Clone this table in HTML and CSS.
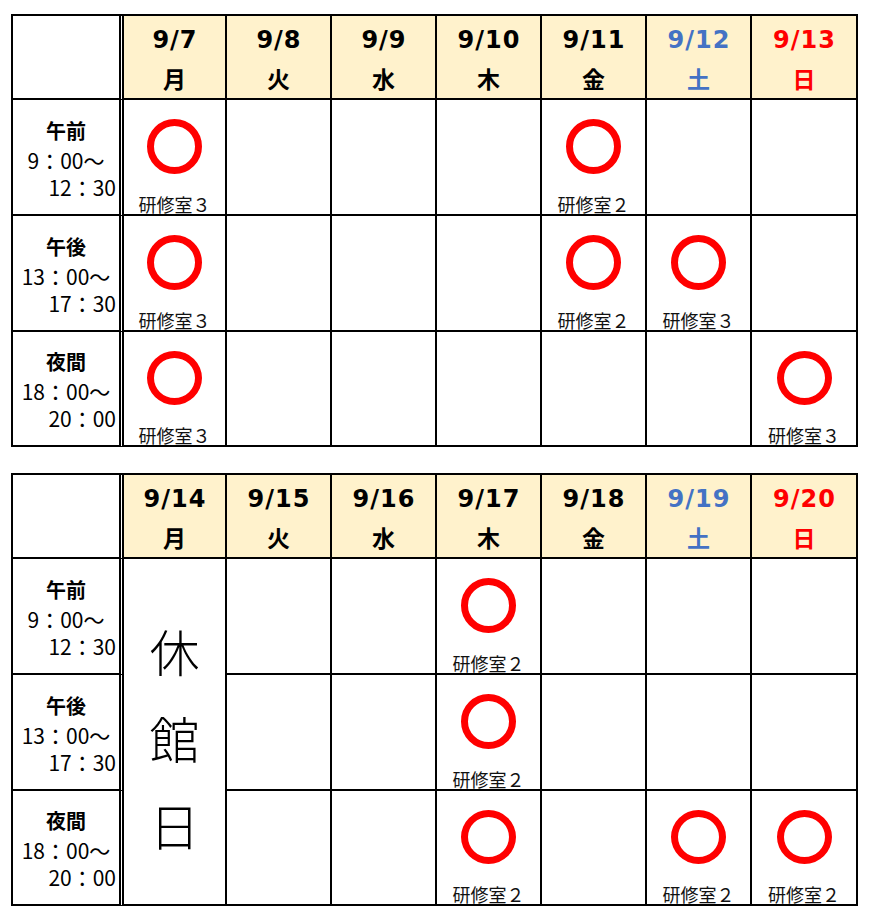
FILE: index.html
```html
<!DOCTYPE html>
<html lang="ja">
<head>
<meta charset="utf-8">
<title>予定表</title>
<link rel="stylesheet" href="styles.css">
</head>
<body>
<div class="page">
  <div class="sched">
    <div class="cell corner"></div>
    <div class="cell head"><span class="date">9/7</span><span class="dow">月</span></div>
    <div class="cell head"><span class="date">9/8</span><span class="dow">火</span></div>
    <div class="cell head"><span class="date">9/9</span><span class="dow">水</span></div>
    <div class="cell head"><span class="date">9/10</span><span class="dow">木</span></div>
    <div class="cell head"><span class="date">9/11</span><span class="dow">金</span></div>
    <div class="cell head sat"><span class="date">9/12</span><span class="dow">土</span></div>
    <div class="cell head sun"><span class="date">9/13</span><span class="dow">日</span></div>

    <div class="cell slot"><span class="slot-name">午前</span><span class="t1">9：00～</span><span class="t2">12：30</span></div>
    <div class="cell avail"><div class="maru"></div><span class="room">研修室３</span></div>
    <div class="cell"></div>
    <div class="cell"></div>
    <div class="cell"></div>
    <div class="cell avail"><div class="maru"></div><span class="room">研修室２</span></div>
    <div class="cell"></div>
    <div class="cell"></div>

    <div class="cell slot"><span class="slot-name">午後</span><span class="t1">13：00～</span><span class="t2">17：30</span></div>
    <div class="cell avail"><div class="maru"></div><span class="room">研修室３</span></div>
    <div class="cell"></div>
    <div class="cell"></div>
    <div class="cell"></div>
    <div class="cell avail"><div class="maru"></div><span class="room">研修室２</span></div>
    <div class="cell avail"><div class="maru"></div><span class="room">研修室３</span></div>
    <div class="cell"></div>

    <div class="cell slot"><span class="slot-name">夜間</span><span class="t1">18：00～</span><span class="t2">20：00</span></div>
    <div class="cell avail"><div class="maru"></div><span class="room">研修室３</span></div>
    <div class="cell"></div>
    <div class="cell"></div>
    <div class="cell"></div>
    <div class="cell"></div>
    <div class="cell"></div>
    <div class="cell avail"><div class="maru"></div><span class="room">研修室３</span></div>
  </div>

  <div class="sched second">
    <div class="cell corner"></div>
    <div class="cell head"><span class="date">9/14</span><span class="dow">月</span></div>
    <div class="cell head"><span class="date">9/15</span><span class="dow">火</span></div>
    <div class="cell head"><span class="date">9/16</span><span class="dow">水</span></div>
    <div class="cell head"><span class="date">9/17</span><span class="dow">木</span></div>
    <div class="cell head"><span class="date">9/18</span><span class="dow">金</span></div>
    <div class="cell head sat"><span class="date">9/19</span><span class="dow">土</span></div>
    <div class="cell head sun"><span class="date">9/20</span><span class="dow">日</span></div>

    <div class="cell slot"><span class="slot-name">午前</span><span class="t1">9：00～</span><span class="t2">12：30</span></div>
    <div class="cell closed"><span>休</span><span>館</span><span>日</span></div>
    <div class="cell"></div>
    <div class="cell"></div>
    <div class="cell avail"><div class="maru"></div><span class="room">研修室２</span></div>
    <div class="cell"></div>
    <div class="cell"></div>
    <div class="cell"></div>

    <div class="cell slot"><span class="slot-name">午後</span><span class="t1">13：00～</span><span class="t2">17：30</span></div>
    <div class="cell"></div>
    <div class="cell"></div>
    <div class="cell avail"><div class="maru"></div><span class="room">研修室２</span></div>
    <div class="cell"></div>
    <div class="cell"></div>
    <div class="cell"></div>

    <div class="cell slot"><span class="slot-name">夜間</span><span class="t1">18：00～</span><span class="t2">20：00</span></div>
    <div class="cell"></div>
    <div class="cell"></div>
    <div class="cell avail"><div class="maru"></div><span class="room">研修室２</span></div>
    <div class="cell"></div>
    <div class="cell avail"><div class="maru"></div><span class="room">研修室２</span></div>
    <div class="cell avail"><div class="maru"></div><span class="room">研修室２</span></div>
  </div>
</div>
</body>
</html>
```

FILE: styles.css
```css
html, body {
  margin: 0;
  padding: 0;
  background: #ffffff;
}

body {
  font-family: "Noto Sans CJK JP", "Noto Sans", sans-serif;
  color: #000000;
}

.page {
  padding: 14px 0 0 11px;
}

.sched {
  display: grid;
  grid-template-columns: 111px 103px repeat(5, 105px) 106px;
  grid-template-rows: 84px 116px 116px 115px;
  width: max-content;
  border-top: 2px solid #000;
  border-left: 2px solid #000;
}

.second {
  margin-top: 26px;
}

.cell {
  box-sizing: border-box;
  border-right: 2px solid #000;
  border-bottom: 2px solid #000;
  background: #ffffff;
}

.corner,
.slot {
  border-right: 5px double #000;
}

.head {
  background: #fff2cc;
  display: flex;
  flex-direction: column;
  align-items: center;
  padding-top: 4px;
}

.date {
  font-family: "DejaVu Sans", "Noto Sans", sans-serif;
  font-weight: 700;
  font-size: 24px;
  line-height: 40px;
  letter-spacing: 1px;
  padding-left: 1px;
}

.dow {
  font-family: "Noto Sans CJK JP", sans-serif;
  font-weight: 700;
  font-size: 23px;
  line-height: 36px;
}

.sat {
  color: #4472c4;
}

.sun {
  color: #ff0000;
}

.slot {
  display: flex;
  flex-direction: column;
  justify-content: center;
  align-items: center;
}

.slot-name {
  font-weight: 700;
  font-size: 20px;
  line-height: 33px;
}

.t1,
.t2 {
  font-size: 21px;
  line-height: 27px;
}

.t2 {
  align-self: flex-end;
  padding-right: 3px;
}

.avail {
  display: flex;
  flex-direction: column;
  align-items: center;
  padding-top: 19px;
}

.maru {
  width: 55px;
  height: 55px;
  box-sizing: border-box;
  border: 7px solid #ff0000;
  border-radius: 50%;
}

.room {
  margin-top: 20px;
  font-size: 18px;
  line-height: 20px;
  color: #111;
}

.closed {
  grid-row: span 3;
  display: flex;
  flex-direction: column;
  align-items: center;
  justify-content: center;
  padding-top: 12px;
  font-size: 50px;
  font-weight: 300;
  line-height: 87px;
}
```
